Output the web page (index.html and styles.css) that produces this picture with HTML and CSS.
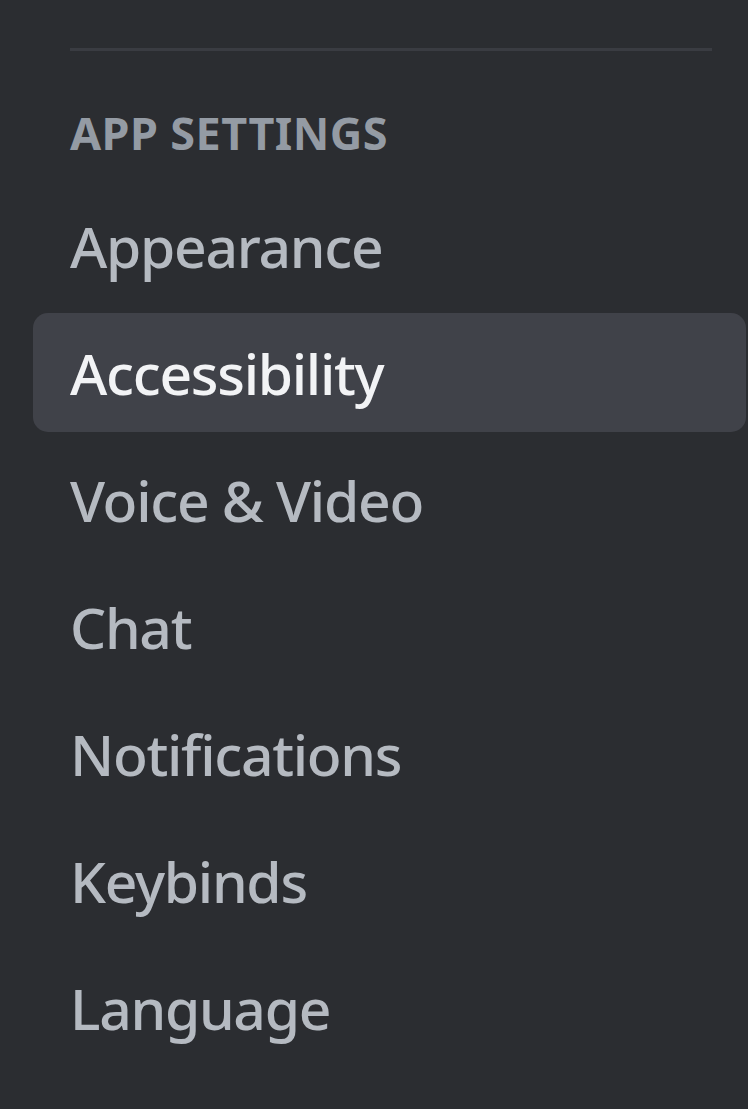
FILE: index.html
```html
<!DOCTYPE html>
<html>
<head>
<meta charset="utf-8">
<link rel="stylesheet" href="styles.css">
</head>
<body>
<nav class="sidebar">
  <div class="divider"></div>
  <div class="header">App Settings</div>
  <div class="item">Appearance</div>
  <div class="item selected">Accessibility</div>
  <div class="item">Voice &amp; Video</div>
  <div class="item">Chat</div>
  <div class="item">Notifications</div>
  <div class="item">Keybinds</div>
  <div class="item">Language</div>
</nav>
</body>
</html>
```
FILE: styles.css
```css
html, body {
  margin: 0;
  padding: 0;
  background: #2b2d31;
  height: 100%;
  overflow: hidden;
}
.sidebar {
  display: flex;
  flex-direction: column;
  padding: 48px 2px 0 33px;
  font-family: "Noto Sans", "DejaVu Sans", sans-serif;
}
.divider {
  height: 3px;
  background: #3a3c42;
  margin: 0 34px 0 37px;
}
.header {
  margin: 52px 0 23px 37px;
  font-size: 45px;
  line-height: 60px;
  font-weight: 700;
  text-transform: uppercase;
  color: #949ba4;
  letter-spacing: 0.4px;
}
.item {
  height: 119px;
  margin-bottom: 8px;
  display: flex;
  align-items: center;
  padding-left: 37px;
  border-radius: 15px;
  font-size: 57px;
  line-height: 58px;
  font-weight: 500;
  color: #b5bac1;
  letter-spacing: -1.3px;
}
.item.selected {
  background: #404249;
  color: #f2f3f5;
}
```
